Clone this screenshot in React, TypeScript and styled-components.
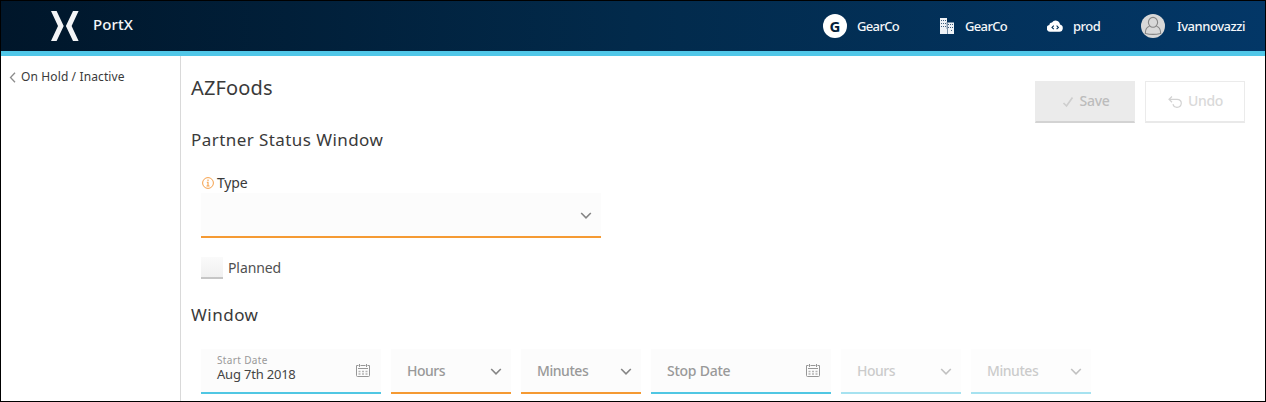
import React from 'react';
import styled, { createGlobalStyle } from 'styled-components';

const GlobalStyle = createGlobalStyle`
  *, *::before, *::after { box-sizing: border-box; }
  body { margin: 0; background: #fff; font-family: 'Noto Sans', 'Open Sans', sans-serif; color: #3a3a3a; }
`;

const Page = styled.div`
  display: flex;
  flex-direction: column;
  width: 1266px;
  height: 402px;
  overflow: hidden;
  border: 1px solid #000;
`;

const Text = styled.span<{ $size: number; $spacing?: number; $weight?: number; $color?: string; $line?: number }>`
  display: block;
  white-space: nowrap;
  font-size: ${p => p.$size}px;
  letter-spacing: ${p => p.$spacing ?? 0}px;
  font-weight: ${p => p.$weight ?? 400};
  line-height: ${p => p.$line ?? 20}px;
  color: ${p => p.$color ?? 'inherit'};
`;

const Header = styled.header`
  display: flex;
  flex: none;
  justify-content: space-between;
  height: 55px;
  padding-left: 50px;
  color: #f4f6f8;
  background: linear-gradient(90deg, #00162a 0%, #022a4b 50%, #033767 100%);
  border-bottom: 5px solid #50c7e8;
`;

const Brand = styled.div`
  display: flex;
  align-items: flex-start;
  gap: 14px;
  padding-top: 10px;
  > span { margin-top: 3px; }
`;

const Account = styled.nav`
  display: flex;
`;

const AccountItem = styled.div<{ $width: number; $gap: number }>`
  display: flex;
  align-items: center;
  gap: ${p => p.$gap}px;
  width: ${p => p.$width}px;
  svg { flex: none; }
`;

const Initial = styled.span`
  display: flex;
  align-items: center;
  justify-content: center;
  width: 24px;
  height: 24px;
  border-radius: 50%;
  background: #fff;
  color: #03203a;
  font-size: 15px;
  font-weight: 700;
`;

const Body = styled.div`
  display: flex;
  flex: 1;
  min-height: 0;
`;

const Sidebar = styled.aside`
  display: flex;
  align-items: flex-start;
  gap: 5px;
  width: 180px;
  padding: 11px 0 0 8px;
  border-right: 1px solid #d9d9d9;
  svg { margin-top: 5px; }
`;

const Main = styled.main`
  flex: 1;
  padding: 0 20px 0 10px;
`;

const TitleRow = styled.div`
  display: flex;
  justify-content: space-between;
  height: 67px;
  padding-top: 17px;
`;

const Actions = styled.div`
  display: flex;
  gap: 10px;
  padding-top: 8px;
`;

const Button = styled.button<{ $filled?: boolean }>`
  display: flex;
  align-items: center;
  justify-content: center;
  gap: 6px;
  width: 100px;
  height: 42px;
  padding: 0 0 2px 1px;
  font-family: inherit;
  color: ${p => (p.$filled ? '#bcbcbc' : '#d9d9d9')};
  background: ${p => (p.$filled ? '#ebebeb' : '#fff')};
  border: 1px solid #ebebeb;
  border-bottom: 2px solid ${p => (p.$filled ? '#d3d3d3' : '#e9e9e9')};
  svg { margin-top: 2px; }
`;

const Section = styled.section`
  padding-top: 6px;
`;

const FieldLabel = styled.div`
  display: flex;
  align-items: center;
  gap: 3px;
  height: 20px;
  margin: 22px 0 0 11px;
`;

const Field = styled.div<{ $width: number; $line?: string; $disabled?: boolean }>`
  display: flex;
  align-items: center;
  justify-content: space-between;
  width: ${p => p.$width}px;
  height: 45px;
  padding: 0 9px 0 16px;
  color: #999;
  background: #fcfcfc;
  border-bottom: 2px solid ${p => p.$line ?? '#50c7e3'};
  opacity: ${p => (p.$disabled ? 0.5 : 1)};
`;

const TypeField = styled(Field)`
  margin: 0 0 0 10px;
`;

const CheckRow = styled.label`
  display: flex;
  align-items: center;
  gap: 5px;
  height: 22px;
  margin: 19px 0 25px 10px;
`;

const CheckBox = styled.span`
  width: 22px;
  height: 22px;
  background: linear-gradient(#fafafa, #f0f0f0);
  border-bottom: 2px solid #c6c6c6;
`;

const FieldRow = styled.div`
  display: flex;
  gap: 10px;
  margin: 23px 0 0 10px;
`;

const DateValue = styled.div`
  display: flex;
  flex-direction: column;
  padding-bottom: 6px;
`;

const Chevron = () => (
  <svg width="12" height="8" viewBox="0 0 12 8" fill="none" stroke="#858585" strokeWidth="1.6">
    <path d="M1.2 2 6 6.8 10.8 2" />
  </svg>
);

const CalendarIcon = styled.svg`
  margin-right: 1px;
`;

const Calendar = () => (
  <CalendarIcon width="15" height="14" viewBox="0 0 15 14" fill="none">
    <path stroke="#979797" d="M2.5 1.5H.5V11.5Q.5 12.5 1.5 12.5H12.5Q13.5 12.5 13.5 11.5V1.5H11.5M4.5 1.5H9.5M2 4.5H12M3.5 0V3M10.5 0V3" />
    <path stroke="#b5b5b5" d="M6 7.5h2M9.5 7.5h2M2.5 7.5h2M2.5 10h2M6 10h2M9.5 10h2" strokeWidth="1.3" />
  </CalendarIcon>
);

const Logo = () => (
  <svg width="28" height="30" viewBox="0 0 28 30" fill="#f3f4f6">
    <path d="M0 0H5.6L12.7 15 5.6 30H0L7 15Z" />
    <path d="M27.6 0H22L14.9 15 22 30H27.6L20.6 15Z" />
  </svg>
);

const Buildings = () => (
  <svg width="16" height="16" viewBox="0 0 16 16">
    <path fill="#eef2f6" d="M1 0H8V16H1Z M8.5 4.5H15V16H8.5Z" />
    <path stroke="#3f5f7d" strokeWidth="1" fill="none" d="M2 2.5h5.5M2 5.5h5.5M2 8.5h5.5M9 6.5h5M9 9.5h5M12 12.5h2" strokeDasharray="1 1" />
    <path fill="#8296aa" d="M7.5 4H8.5V11H7.5z" />
  </svg>
);

const Cloud = () => (
  <svg width="16" height="12" viewBox="0 0 16 12">
    <path fill="#fff" d="M3.5 11.7A3.4 3.4 0 0 1 2.4 5 2.6 2.6 0 0 1 5 2.4 4.4 4.4 0 0 1 13 4.6 3.6 3.6 0 0 1 12.4 11.7Z" />
    <path fill="none" stroke="#033156" strokeWidth="1.1" d="M6.8 5.6 5 7.4 6.8 9.2M9.6 5.6 11.4 7.4 9.6 9.2" />
  </svg>
);

const Avatar = () => (
  <svg width="24" height="24" viewBox="0 0 24 24">
    <circle cx="12" cy="12" r="12" fill="#d8d8d8" />
    <g fill="none" stroke="#858585" strokeWidth="1.1">
      <ellipse cx="12" cy="8.3" rx="4.6" ry="4.9" />
      <path d="M8.5 12.3C5.5 13 4.4 15 4.3 19.5Q12 21.2 19.7 19.5C19.6 15 18.5 13 15.5 12.3" />
    </g>
  </svg>
);

interface SelectProps {
  label: string;
  spacing: number;
  line?: string;
  disabled?: boolean;
}

const SmallSelect = ({ label, spacing, line, disabled }: SelectProps) => (
  <Field $width={120} $line={line} $disabled={disabled}>
    <Text $size={14} $weight={500} $spacing={spacing}>{label}</Text>
    <Chevron />
  </Field>
);

export default function App() {
  return (
    <Page>
      <GlobalStyle />
      <Header>
        <Brand>
          <Logo />
          <Text $size={15} $spacing={0.1} $weight={500}>PortX</Text>
        </Brand>
        <Account>
          <AccountItem $width={116} $gap={10}>
            <Initial>G</Initial>
            <Text $size={13} $spacing={-0.65} $weight={500}>GearCo</Text>
          </AccountItem>
          <AccountItem $width={108} $gap={10}>
            <Buildings />
            <Text $size={13} $spacing={-0.65} $weight={500}>GearCo</Text>
          </AccountItem>
          <AccountItem $width={94} $gap={10}>
            <Cloud />
            <Text $size={13} $spacing={-0.5} $weight={500}>prod</Text>
          </AccountItem>
          <AccountItem $width={124} $gap={12}>
            <Avatar />
            <Text $size={13} $spacing={-0.45} $weight={500}>Ivannovazzi</Text>
          </AccountItem>
        </Account>
      </Header>
      <Body>
        <Sidebar>
          <svg width="7" height="11" viewBox="0 0 7 11" fill="none" stroke="#8c8c8c" strokeWidth="1.3">
            <path d="M6 .7 1.5 5.5 6 10.3" />
          </svg>
          <Text $size={12} $spacing={0.12}>On Hold / Inactive</Text>
        </Sidebar>
        <Main>
          <TitleRow>
            <Text $size={20} $spacing={0.15} $line={30}>AZFoods</Text>
            <Actions>
              <Button $filled>
                <svg width="12" height="12" viewBox="0 0 12 12" fill="none" stroke="#cecece" strokeWidth="1.7">
                  <path d="M1.5 7 4.5 10 10.5 1.5" />
                </svg>
                <Text $size={14} $spacing={-0.3} $weight={500}>Save</Text>
              </Button>
              <Button>
                <svg width="14" height="12" viewBox="0 0 14 12" fill="none" stroke="#d2d2d2" strokeWidth="1.2">
                  <path d="M4 .5 1 3.3 4 6.2M1 3.3H9Q13.3 3.5 13.3 7.2 13 11.2 9 11.3 5.5 11.2 5 8.2" />
                </svg>
                <Text $size={14} $spacing={-0.3} $weight={500}>Undo</Text>
              </Button>
            </Actions>
          </TitleRow>
          <Section>
            <Text $size={17} $spacing={0.43} $line={22}>Partner Status Window</Text>
            <FieldLabel>
              <svg width="12" height="12" viewBox="0 0 12 12" fill="none" stroke="#f5a04a">
                <circle cx="6" cy="6" r="5.4" />
                <path d="M6 2.5V4M4.8 5.2H6V9M4.5 9H7.5" strokeWidth="1.1" />
              </svg>
              <Text $size={14} $spacing={-0.2}>Type</Text>
            </FieldLabel>
            <TypeField $width={400} $line="#f59a33">
              <span />
              <Chevron />
            </TypeField>
            <CheckRow>
              <CheckBox />
              <Text $size={14} $spacing={-0.1} $color="#505050">Planned</Text>
            </CheckRow>
            <Text $size={17} $spacing={0.5} $line={22}>Window</Text>
            <FieldRow>
              <Field $width={180}>
                <DateValue>
                  <Text $size={10} $spacing={0.35} $line={13}>Start Date</Text>
                  <Text $size={13} $spacing={-0.2} $line={14} $color="#444">Aug 7th 2018</Text>
                </DateValue>
                <Calendar />
              </Field>
              <SmallSelect label="Hours" spacing={-0.5} line="#f59a33" />
              <SmallSelect label="Minutes" spacing={-0.45} line="#f59a33" />
              <Field $width={180}>
                <Text $size={14} $weight={500} $spacing={-0.25}>Stop Date</Text>
                <Calendar />
              </Field>
              <SmallSelect label="Hours" spacing={-0.5} disabled />
              <SmallSelect label="Minutes" spacing={-0.45} disabled />
            </FieldRow>
          </Section>
        </Main>
      </Body>
    </Page>
  );
}
